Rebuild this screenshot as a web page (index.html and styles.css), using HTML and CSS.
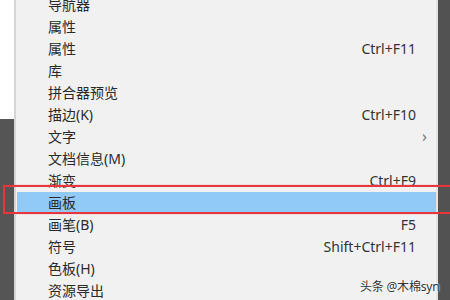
FILE: index.html
```html
<!DOCTYPE html>
<html lang="zh">
<head>
<meta charset="utf-8">
<link rel="stylesheet" href="styles.css">
</head>
<body>
<div class="screen">
  <div class="left-side">
    <div class="left-top"></div>
    <div class="left-bottom"></div>
  </div>
  <div class="menu">
    <ul class="items">
      <li class="item"><span class="label">导航器</span></li>
      <li class="item"><span class="label">属性</span></li>
      <li class="item"><span class="label">属性</span><span class="key">Ctrl+F11</span></li>
      <li class="item"><span class="label">库</span></li>
      <li class="item"><span class="label">拼合器预览</span></li>
      <li class="item"><span class="label">描边(K)</span><span class="key">Ctrl+F10</span></li>
      <li class="item"><span class="label">文字</span><span class="arrow">›</span></li>
      <li class="item"><span class="label">文档信息(M)</span></li>
      <li class="item"><span class="label">渐变</span><span class="key">Ctrl+F9</span></li>
      <li class="item selected"><span class="label">画板</span></li>
      <li class="item"><span class="label">画笔(B)</span><span class="key">F5</span></li>
      <li class="item"><span class="label">符号</span><span class="key">Shift+Ctrl+F11</span></li>
      <li class="item"><span class="label">色板(H)</span></li>
      <li class="item"><span class="label">资源导出</span></li>
    </ul>
  </div>
  <div class="right-side"></div>
  <div class="annotation"></div>
  <div class="watermark">头条 @木棉syn</div>
</div>
</body>
</html>
```
FILE: styles.css
```css
html, body {
  margin: 0;
  padding: 0;
}
body {
  width: 450px;
  height: 300px;
  overflow: hidden;
  font-family: "Noto Sans", "Noto Sans CJK SC", sans-serif;
  font-size: 14px;
  color: #2a2a2a;
}
.screen {
  position: relative;
  display: flex;
  width: 450px;
  height: 300px;
  overflow: hidden;
}
.left-side {
  width: 14px;
  display: flex;
  flex-direction: column;
}
.left-top {
  height: 119px;
  background: #ffffff;
}
.left-bottom {
  flex: 1;
  background: #555555;
}
.menu {
  flex: 1;
  background: #f1f1f1;
  border-left: 2px solid #d6d6d6;
  border-right: 2px solid #e4e4e4;
  overflow: hidden;
}
.items {
  list-style: none;
  margin: -7px 0 0 0;
  padding: 0;
}
.item {
  display: flex;
  align-items: center;
  height: 22px;
  padding: 0 20px 0 32px;
  white-space: nowrap;
}
.item.selected {
  height: 20px;
  margin: 1px 0 1px 1px;
  padding-left: 31px;
  background: #91c9f7;
}
.label {
  flex: 1;
}
.key {
  color: #333;
}
.arrow {
  color: #777;
  font-size: 16px;
  margin-right: -11px;
}
.right-side {
  width: 12px;
  background: #525252;
}
.annotation {
  position: absolute;
  left: 3px;
  top: 185px;
  width: 460px;
  height: 25px;
  border: 2px solid #e8363f;
  box-shadow: 0 0 1px rgba(232, 54, 63, 0.6);
}
.watermark {
  position: absolute;
  left: 360px;
  top: 277px;
  font-size: 12px;
  letter-spacing: -0.2px;
  color: #333;
  text-shadow: 0 0 2px #fff, 0 0 2px #fff;
}
```
